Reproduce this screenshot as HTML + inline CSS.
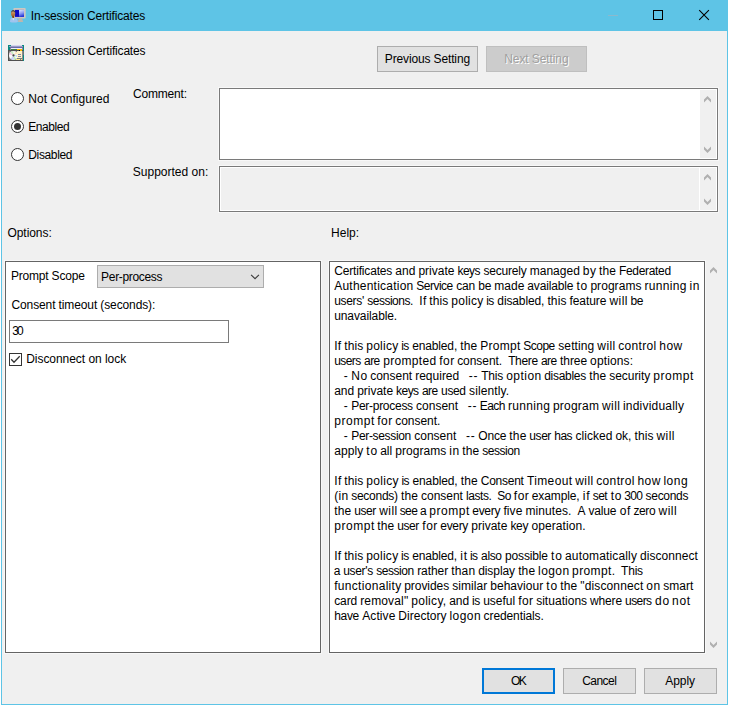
<!DOCTYPE html>
<html lang="en">
<head>
<meta charset="utf-8">
<title>In-session Certificates</title>
<style>
html,body{margin:0;padding:0;background:#fff;}
body{width:730px;height:708px;position:relative;overflow:hidden;font-family:"Liberation Sans",sans-serif;font-size:12px;color:#000;}
.abs,.t,#win div,#win svg{position:absolute;}
#win{position:absolute;left:1px;top:0;width:727px;height:705px;background:#5ec4e6;}
#client{left:1px;top:31px;width:725px;height:673px;background:#f0f0f0;}
.t{white-space:pre;line-height:15px;height:15px;font-size:12px;color:#000;}
.t.w span{position:absolute;top:0;white-space:pre;}
.t.dis{color:#a0a0a0;text-shadow:1px 1px 0 #fff;}
.btn{background:#e1e1e1;border:1px solid #adadad;box-sizing:border-box;}
.btn.def{border:2px solid #0078d7;}
.btn.off{background:#cccccc;border-color:#bfbfbf;}
.box{box-sizing:border-box;border:1px solid #7a7a7a;background:#fff;box-shadow:0 0 0 1px rgba(255,255,255,.5);}
.panel{box-sizing:border-box;border:1px solid #646464;background:#fff;box-shadow:0 0 0 1px rgba(255,255,255,.5);}
.radio{width:13px;height:13px;box-sizing:border-box;border:1px solid #333;border-radius:50%;background:#fff;}
.radio.on::after{content:"";position:absolute;left:2px;top:2px;width:7px;height:7px;border-radius:50%;background:#333;}
</style>
</head>
<body>
<div id="win">
  <div id="client"></div>
</div>
<!-- all coordinates below are page coordinates -->
<div id="ui">
  <!-- caption buttons -->
  <svg class="abs" style="left:600px;top:0" width="128" height="31" viewBox="0 0 128 31">
    <rect x="8" y="15" width="10" height="1" fill="#8cb9cc"/>
    <rect x="53.5" y="10.5" width="9" height="9" fill="none" stroke="#000" stroke-width="1"/>
    <path d="M99.2 10.2 L108.9 19.9 M108.9 10.2 L99.2 19.9" stroke="#000" stroke-width="1.05" fill="none"/>
  </svg>

  <!-- title icon -->
  <svg class="abs" style="left:8px;top:5px" width="20" height="20" viewBox="-2 -2 20 20">
    <defs>
      <filter id="sb" x="-20%" y="-20%" width="140%" height="140%"><feGaussianBlur stdDeviation="0.35"/></filter>
      <linearGradient id="scr2" x1="0" x2="0.25" y1="0" y2="1"><stop offset="0" stop-color="#dfe6ff"/><stop offset=".55" stop-color="#8c9cf2"/><stop offset="1" stop-color="#2a3ad8"/></linearGradient>
      <linearGradient id="skin" x1="0" x2="0" y1="0" y2="1"><stop offset="0" stop-color="#e0a878"/><stop offset="1" stop-color="#9a5a20"/></linearGradient>
    </defs>
    <g filter="url(#sb)">
      <rect x="3.4" y="1.1" width="12.3" height="10.4" rx="1" fill="#cec8c0"/>
      <rect x="5" y="2.9" width="9" height="7" fill="#0a0ac4"/>
      <rect x="9" y="2.9" width="5" height="7" fill="url(#scr2)"/>
      <path d="M8.6 11.3 L12 11.3 L13.2 14.9 L8 14.9 Z" fill="#bdb6ae"/>
      <ellipse cx="3.1" cy="6.6" rx="2.1" ry="3.1" fill="url(#skin)"/>
      <rect x="2.2" y="9" width="2" height="2" fill="#8a4a14"/>
      <path d="M1 6 Q1.2 2.8 3.4 3 Q5.4 3.2 5.3 6.2 Q4.4 4.4 3.2 4.6 Q1.8 4.6 1 6Z" fill="#4a4a4a"/>
      <path d="M0 15 Q0 10.6 2.2 10.4 L3.2 11.8 L4.4 10.4 Q7.9 10.6 7.9 15 Q4 16.2 0 15Z" fill="#a0c4ee"/>
      <path d="M2.4 11.2 L3.2 13.4 L4.2 11.2 Z" fill="#e4eefb"/>
    </g>
  </svg>

  <!-- policy icon -->
  <svg class="abs" style="left:8px;top:45px" width="16" height="16" viewBox="0 0 16 16">
    <g shape-rendering="crispEdges">
      <rect x="0" y="0" width="16" height="16" fill="#7c7c7c"/>
      <rect x="0" y="0" width="3" height="1" fill="#0a8a80"/><rect x="14" y="0" width="2" height="1" fill="#0a8a80"/>
      <rect x="3" y="0" width="11" height="1" fill="#d4d4ee"/>
      <rect x="0" y="1" width="1" height="4" fill="#0a8a80"/><rect x="1" y="2" width="1" height="3" fill="#0a8a80"/>
      <rect x="1" y="1" width="14" height="1" fill="#9a9ac6"/>
      <rect x="2" y="2" width="13" height="1" fill="#6a6aa6"/>
      <rect x="15" y="1" width="1" height="15" fill="#0a8a80"/>
      <rect x="2" y="3" width="13" height="2" fill="#8a8a9a"/>
      <rect x="3" y="3" width="11" height="1" fill="#eeeefa"/>
      <rect x="3" y="4" width="6" height="1" fill="#3f8040"/>
      <rect x="9" y="4" width="5" height="1" fill="#f8b800"/>
      <rect x="0" y="5" width="15" height="1" fill="#505050"/>
      <rect x="11" y="5" width="1" height="1" fill="#000"/><rect x="12" y="5" width="2" height="1" fill="#f8b800"/>
      <rect x="0" y="6" width="1" height="10" fill="#505050"/>
      <rect x="0" y="15" width="15" height="1" fill="#505050"/>
      <rect x="14" y="6" width="1" height="9" fill="#8c8c8c"/>
      <rect x="15" y="6" width="1" height="4" fill="#6a7a7a"/>
    </g>
    <circle cx="5.5" cy="10.4" r="4.5" fill="#fafafa"/>
    <path d="M5.5 10.4 L2.3 7.2 A4.5 4.5 0 0 1 5.2 5.9Z" fill="#c8f0c0"/>
    <path d="M5.5 10.4 L1.1 9.6 A4.5 4.5 0 0 1 2.3 7.2Z" fill="#f4c8e4"/>
    <path d="M5.5 10.4 L2.6 13.8 A4.5 4.5 0 0 0 6 14.9Z" fill="#c8d0fa"/>
    <path d="M5.5 10.4 L6 14.9 A4.5 4.5 0 0 0 8.4 13.8Z" fill="#c0f0b8"/>
    <path d="M5.5 10.4 L9.6 12.2 A4.5 4.5 0 0 0 10 10Z" fill="#b8dcf8"/>
    <path d="M5.5 10.4 L9.6 8.4 A4.5 4.5 0 0 0 7.6 6.4Z" fill="#fce4c0"/>
    <circle cx="5.5" cy="10.4" r="1.1" fill="#454545"/>
    <g shape-rendering="crispEdges">
      <rect x="9" y="6" width="5" height="7" fill="#fff3c8"/>
      <rect x="10" y="9" width="3" height="1" fill="#8484aa"/>
      <rect x="10" y="11" width="3" height="1" fill="#8484aa"/>
      <rect x="8" y="14" width="4" height="1" fill="#ffe88c"/>
      <rect x="13" y="14" width="1" height="1" fill="#ffe88c"/>
    </g>
  </svg>

  <!-- prev / next -->
  <div class="abs btn" style="left:377px;top:46px;width:101px;height:26px"></div>
  <div class="abs btn off" style="left:486px;top:46px;width:101px;height:26px"></div>

  <!-- radios -->
  <div class="abs radio" style="left:11px;top:92px"></div>
  <div class="abs radio on" style="left:11px;top:120px"></div>
  <div class="abs radio" style="left:11px;top:148px"></div>

  <!-- comment box -->
  <div class="abs box" style="left:219px;top:88px;width:499px;height:72px"></div>
  <div class="abs" style="left:700px;top:90px;width:16px;height:68px;background:#f0f0f0"></div>

  <!-- supported box -->
  <div class="abs box" style="left:219px;top:166px;width:499px;height:46px"></div>
  <div class="abs" style="left:221px;top:168px;width:478px;height:42px;background:#f0f0f0"></div>
  <div class="abs" style="left:700px;top:168px;width:16px;height:42px;background:#f0f0f0"></div>

  <!-- panels -->
  <div class="abs panel" style="left:5px;top:261px;width:316px;height:392px"></div>
  <div class="abs panel" style="left:329px;top:261px;width:376px;height:392px"></div>

  <!-- scroll chevrons -->
  <svg class="abs" style="left:0;top:0" width="730" height="708" viewBox="0 0 730 708" fill="#b0b0b0">
    <polygon points="707.5,96 711,99.5 711,102.4 707.5,98.9 704,102.4 704,99.5"/>
    <polygon points="707.5,153 711,149.5 711,146.6 707.5,150.1 704,146.6 704,149.5"/>
    <polygon points="707.5,174 711,177.5 711,180.4 707.5,176.9 704,180.4 704,177.5"/>
    <polygon points="707.5,205 711,201.5 711,198.6 707.5,202.1 704,198.6 704,201.5"/>
    <polygon points="713.5,267 717,270.5 717,273.4 713.5,269.9 710,273.4 710,270.5"/>
    <polygon points="713.5,648 717,644.5 717,641.6 713.5,645.1 710,641.6 710,644.5"/>
  </svg>

  <!-- dropdown -->
  <div class="abs btn" style="left:97px;top:265px;width:167px;height:23px"></div>
  <svg class="abs" style="left:250px;top:273px" width="11" height="8" viewBox="0 0 11 8"><path d="M1.1 1.85 L5.03 5.6 L8.95 1.85" fill="none" stroke="#3c3c3c" stroke-width="1.15"/></svg>

  <!-- input -->
  <div class="abs box" style="left:9px;top:320px;width:220px;height:23px"></div>

  <!-- checkbox -->
  <div class="abs" style="left:9px;top:353px;width:13px;height:13px;box-sizing:border-box;border:1px solid #333;background:#fff"></div>
  <svg class="abs" style="left:9px;top:353px" width="13" height="13" viewBox="0 0 13 13"><path d="M2.2 6.3 L5 9.3 L10.7 3.3" fill="none" stroke="#333" stroke-width="1.25"/></svg>

  <!-- bottom buttons -->
  <div class="abs btn def" style="left:482px;top:668px;width:73px;height:26px"></div>
  <div class="abs btn" style="left:563px;top:668px;width:73px;height:26px"></div>
  <div class="abs btn" style="left:644px;top:668px;width:73px;height:26px"></div>
</div>
<div id="txt">
<div class="t w" style="left:334.20px;top:264px"><span style="left:0.00px;letter-spacing:-0.169px">Certificates </span><span style="left:61.16px;letter-spacing:0.016px">and </span><span style="left:84.22px;letter-spacing:0.013px">private </span><span style="left:123.33px;letter-spacing:-0.537px">keys </span><span style="left:149.40px;letter-spacing:-0.224px">securely </span><span style="left:195.52px;letter-spacing:0.016px">managed </span><span style="left:248.66px;letter-spacing:0.361px">by </span><span style="left:264.71px;letter-spacing:0.182px">the </span><span style="left:284.76px;letter-spacing:-0.320px">Federated</span></div>
<div class="t w" style="left:334.20px;top:279px"><span style="left:0.00px;letter-spacing:0.232px">Authentication </span><span style="left:82.07px;letter-spacing:-0.497px">Service </span><span style="left:122.10px;letter-spacing:-0.166px">can </span><span style="left:144.12px;letter-spacing:-0.337px">be </span><span style="left:160.13px;letter-spacing:0.002px">made </span><span style="left:193.16px;letter-spacing:-0.166px">available </span><span style="left:242.30px;letter-spacing:0.800px">to </span><span style="left:256.21px;letter-spacing:0.051px">programs </span><span style="left:310.25px;letter-spacing:0.334px">running </span><span style="left:355.29px;letter-spacing:0.668px">in</span></div>
<div class="t w" style="left:334.20px;top:294px"><span style="left:0.00px;letter-spacing:-0.321px">users' </span><span style="left:33.03px;letter-spacing:-0.497px">sessions.  </span><span style="left:85.08px;letter-spacing:0.339px">If </span><span style="left:95.09px;letter-spacing:0.115px">this </span><span style="left:117.11px;letter-spacing:0.270px">policy </span><span style="left:152.12px;letter-spacing:-0.600px">is </span><span style="left:163.16px;letter-spacing:-0.124px">disabled, </span><span style="left:213.21px;letter-spacing:0.115px">this </span><span style="left:235.23px;letter-spacing:-0.054px">feature </span><span style="left:275.27px;letter-spacing:0.451px">will </span><span style="left:296.29px;letter-spacing:-0.335px">be</span></div>
<div class="t w" style="left:334.20px;top:309px"><span style="left:0.00px;letter-spacing:-0.095px">unavailable.</span></div>
<div class="t w" style="left:334.20px;top:339px"><span style="left:0.00px;letter-spacing:0.334px">If </span><span style="left:10.00px;letter-spacing:0.111px">this </span><span style="left:32.01px;letter-spacing:0.266px">policy </span><span style="left:66.99px;letter-spacing:-0.600px">is </span><span style="left:78.02px;letter-spacing:-0.147px">enabled, </span><span style="left:126.04px;letter-spacing:0.162px">the </span><span style="left:146.04px;letter-spacing:0.267px">Prompt </span><span style="left:189.05px;letter-spacing:-0.504px">Scope </span><span style="left:224.06px;letter-spacing:0.109px">setting </span><span style="left:263.08px;letter-spacing:0.447px">will </span><span style="left:284.08px;letter-spacing:0.332px">control </span><span style="left:325.09px;letter-spacing:0.496px">how</span></div>
<div class="t w" style="left:334.20px;top:354px"><span style="left:0.00px;letter-spacing:-0.588px">users </span><span style="left:29.92px;letter-spacing:-0.600px">are </span><span style="left:48.98px;letter-spacing:0.327px">prompted </span><span style="left:104.96px;letter-spacing:0.496px">for </span><span style="left:122.96px;letter-spacing:-0.054px">consent.  </span><span style="left:173.94px;letter-spacing:-0.339px">There </span><span style="left:206.86px;letter-spacing:-0.600px">are </span><span style="left:225.92px;letter-spacing:-0.090px">three </span><span style="left:255.91px;letter-spacing:0.137px">options:</span></div>
<div class="t w" style="left:334.20px;top:369px"><span style="left:0.00px;letter-spacing:0.000px">   </span><span style="left:9.51px;letter-spacing:0.000px">- </span><span style="left:17.00px;letter-spacing:0.665px">No </span><span style="left:36.01px;letter-spacing:-0.003px">consent </span><span style="left:81.02px;letter-spacing:-0.002px">required   </span><span style="left:134.64px;letter-spacing:0.800px">-- </span><span style="left:147.04px;letter-spacing:-0.221px">This </span><span style="left:172.05px;letter-spacing:0.463px">option </span><span style="left:210.06px;letter-spacing:-0.288px">disables </span><span style="left:255.07px;letter-spacing:0.162px">the </span><span style="left:275.08px;letter-spacing:-0.047px">security </span><span style="left:319.09px;letter-spacing:0.533px">prompt</span></div>
<div class="t w" style="left:334.20px;top:384px"><span style="left:0.00px;letter-spacing:-0.022px">and </span><span style="left:22.97px;letter-spacing:-0.010px">private </span><span style="left:61.93px;letter-spacing:-0.567px">keys </span><span style="left:87.82px;letter-spacing:-0.600px">are </span><span style="left:106.88px;letter-spacing:-0.350px">used </span><span style="left:134.85px;letter-spacing:0.104px">silently.</span></div>
<div class="t w" style="left:334.20px;top:399px"><span style="left:0.00px;letter-spacing:0.000px">   </span><span style="left:9.49px;letter-spacing:0.000px">- </span><span style="left:16.99px;letter-spacing:-0.274px">Per-process </span><span style="left:81.93px;letter-spacing:-0.011px">consent   </span><span style="left:133.49px;letter-spacing:0.800px">-- </span><span style="left:145.59px;letter-spacing:-0.600px">Each </span><span style="left:173.85px;letter-spacing:0.322px">running </span><span style="left:218.81px;letter-spacing:0.213px">program </span><span style="left:267.77px;letter-spacing:0.440px">will </span><span style="left:288.75px;letter-spacing:0.204px">individually</span></div>
<div class="t w" style="left:334.20px;top:414px"><span style="left:0.00px;letter-spacing:0.538px">prompt </span><span style="left:43.04px;letter-spacing:0.505px">for </span><span style="left:61.06px;letter-spacing:-0.046px">consent.</span></div>
<div class="t w" style="left:334.20px;top:429px"><span style="left:0.00px;letter-spacing:0.000px">   </span><span style="left:9.51px;letter-spacing:0.000px">- </span><span style="left:17.02px;letter-spacing:-0.330px">Per-session </span><span style="left:80.07px;letter-spacing:0.001px">consent   </span><span style="left:131.72px;letter-spacing:0.800px">-- </span><span style="left:144.13px;letter-spacing:-0.219px">Once </span><span style="left:175.15px;letter-spacing:0.167px">the </span><span style="left:195.17px;letter-spacing:-0.441px">user </span><span style="left:220.13px;letter-spacing:-0.600px">has </span><span style="left:241.21px;letter-spacing:0.059px">clicked </span><span style="left:281.25px;letter-spacing:0.003px">ok, </span><span style="left:300.26px;letter-spacing:0.114px">this </span><span style="left:322.28px;letter-spacing:0.451px">will</span></div>
<div class="t w" style="left:334.20px;top:444px"><span style="left:0.00px;letter-spacing:0.078px">apply </span><span style="left:32.10px;letter-spacing:0.800px">to </span><span style="left:46.00px;letter-spacing:-0.003px">all </span><span style="left:61.00px;letter-spacing:0.045px">programs </span><span style="left:115.00px;letter-spacing:0.660px">in </span><span style="left:128.00px;letter-spacing:0.159px">the </span><span style="left:148.00px;letter-spacing:-0.448px">session</span></div>
<div class="t w" style="left:334.20px;top:474px"><span style="left:0.00px;letter-spacing:0.360px">If </span><span style="left:10.04px;letter-spacing:0.134px">this </span><span style="left:32.13px;letter-spacing:0.290px">policy </span><span style="left:67.25px;letter-spacing:-0.600px">is </span><span style="left:78.31px;letter-spacing:-0.123px">enabled, </span><span style="left:126.50px;letter-spacing:0.193px">the </span><span style="left:146.58px;letter-spacing:-0.254px">Consent </span><span style="left:192.76px;letter-spacing:0.379px">Timeout </span><span style="left:240.95px;letter-spacing:0.469px">will </span><span style="left:262.04px;letter-spacing:0.356px">control </span><span style="left:303.20px;letter-spacing:0.539px">how </span><span style="left:329.30px;letter-spacing:0.469px">long</span></div>
<div class="t w" style="left:334.20px;top:489px"><span style="left:0.00px;letter-spacing:0.318px">(in </span><span style="left:16.97px;letter-spacing:-0.255px">seconds) </span><span style="left:66.87px;letter-spacing:0.142px">the </span><span style="left:86.83px;letter-spacing:-0.019px">consent </span><span style="left:131.74px;letter-spacing:-0.412px">lasts.  </span><span style="left:163.12px;letter-spacing:-0.600px">So </span><span style="left:179.65px;letter-spacing:0.483px">for </span><span style="left:197.61px;letter-spacing:-0.112px">example, </span><span style="left:248.60px;letter-spacing:0.800px">if </span><span style="left:258.49px;letter-spacing:-0.519px">set </span><span style="left:276.54px;letter-spacing:0.800px">to </span><span style="left:290.00px;letter-spacing:-0.600px">300 </span><span style="left:311.38px;letter-spacing:-0.297px">seconds</span></div>
<div class="t w" style="left:334.20px;top:504px"><span style="left:0.00px;letter-spacing:0.169px">the </span><span style="left:20.02px;letter-spacing:-0.439px">user </span><span style="left:45.05px;letter-spacing:0.452px">will </span><span style="left:65.51px;letter-spacing:-0.600px">see </span><span style="left:85.77px;letter-spacing:0.000px">a </span><span style="left:95.11px;letter-spacing:0.540px">prompt </span><span style="left:138.16px;letter-spacing:-0.328px">every </span><span style="left:169.20px;letter-spacing:0.116px">five </span><span style="left:191.22px;letter-spacing:0.100px">minutes.  </span><span style="left:243.29px;letter-spacing:0.000px">A </span><span style="left:254.30px;letter-spacing:-0.164px">value </span><span style="left:285.44px;letter-spacing:0.800px">of </span><span style="left:299.35px;letter-spacing:-0.439px">zero </span><span style="left:324.38px;letter-spacing:0.452px">will</span></div>
<div class="t w" style="left:334.20px;top:519px"><span style="left:0.00px;letter-spacing:0.540px">prompt </span><span style="left:43.05px;letter-spacing:0.169px">the </span><span style="left:63.08px;letter-spacing:-0.439px">user </span><span style="left:88.11px;letter-spacing:0.507px">for </span><span style="left:106.13px;letter-spacing:-0.328px">every </span><span style="left:137.16px;letter-spacing:0.004px">private </span><span style="left:176.21px;letter-spacing:-0.326px">key </span><span style="left:197.24px;letter-spacing:0.077px">operation.</span></div>
<div class="t w" style="left:334.20px;top:549px"><span style="left:0.00px;letter-spacing:0.326px">If </span><span style="left:9.99px;letter-spacing:0.104px">this </span><span style="left:31.97px;letter-spacing:0.259px">policy </span><span style="left:66.91px;letter-spacing:-0.600px">is </span><span style="left:77.94px;letter-spacing:-0.154px">enabled, </span><span style="left:125.99px;letter-spacing:0.800px">it </span><span style="left:135.85px;letter-spacing:-0.600px">is </span><span style="left:146.88px;letter-spacing:-0.344px">also </span><span style="left:170.86px;letter-spacing:-0.152px">possible </span><span style="left:216.91px;letter-spacing:0.800px">to </span><span style="left:230.81px;letter-spacing:0.159px">automatically </span><span style="left:305.75px;letter-spacing:0.065px">disconnect</span></div>
<div class="t w" style="left:334.20px;top:564px"><span style="left:-0.34px;letter-spacing:0.000px">a </span><span style="left:9.00px;letter-spacing:-0.329px">user's </span><span style="left:41.99px;letter-spacing:-0.450px">session </span><span style="left:82.97px;letter-spacing:-0.072px">rather </span><span style="left:116.96px;letter-spacing:0.212px">than </span><span style="left:143.95px;letter-spacing:-0.061px">display </span><span style="left:183.94px;letter-spacing:0.156px">the </span><span style="left:203.93px;letter-spacing:0.407px">logon </span><span style="left:237.92px;letter-spacing:0.384px">prompt.  </span><span style="left:286.91px;letter-spacing:-0.226px">This</span></div>
<div class="t w" style="left:334.20px;top:579px"><span style="left:0.00px;letter-spacing:0.304px">functionality </span><span style="left:70.02px;letter-spacing:-0.049px">provides </span><span style="left:118.03px;letter-spacing:0.058px">similar </span><span style="left:156.04px;letter-spacing:0.039px">behaviour </span><span style="left:212.16px;letter-spacing:0.800px">to </span><span style="left:226.06px;letter-spacing:0.162px">the </span><span style="left:246.07px;letter-spacing:0.139px">&quot;disconnect </span><span style="left:312.09px;letter-spacing:0.656px">on </span><span style="left:329.09px;letter-spacing:0.002px">smart</span></div>
<div class="t w" style="left:334.20px;top:594px"><span style="left:0.00px;letter-spacing:-0.117px">card </span><span style="left:25.99px;letter-spacing:0.150px">removal&quot; </span><span style="left:76.98px;letter-spacing:0.311px">policy, </span><span style="left:114.97px;letter-spacing:-0.014px">and </span><span style="left:137.93px;letter-spacing:-0.600px">is </span><span style="left:148.96px;letter-spacing:-0.006px">useful </span><span style="left:183.95px;letter-spacing:0.496px">for </span><span style="left:201.94px;letter-spacing:0.032px">situations </span><span style="left:255.93px;letter-spacing:-0.173px">where </span><span style="left:290.92px;letter-spacing:-0.588px">users </span><span style="left:320.91px;letter-spacing:0.648px">do </span><span style="left:337.91px;letter-spacing:0.657px">not</span></div>
<div class="t w" style="left:334.20px;top:609px"><span style="left:0.00px;letter-spacing:-0.317px">have </span><span style="left:28.08px;letter-spacing:0.083px">Active </span><span style="left:64.18px;letter-spacing:0.016px">Directory </span><span style="left:115.33px;letter-spacing:0.432px">logon </span><span style="left:149.43px;letter-spacing:-0.108px">credentials.</span></div>
<div class="t title" style="left:30.73px;top:9px;letter-spacing:-0.161px">In-session Certificates</div>
<div class="t" style="left:31.73px;top:44px;letter-spacing:-0.195px">In-session Certificates</div>
<div class="t" style="left:384.80px;top:52px;letter-spacing:-0.138px">Previous Setting</div>
<div class="t dis" style="left:504.30px;top:52px;letter-spacing:-0.101px">Next Setting</div>
<div class="t" style="left:28.30px;top:92px;letter-spacing:0.025px">Not Configured</div>
<div class="t" style="left:28.30px;top:120px;letter-spacing:-0.461px">Enabled</div>
<div class="t" style="left:28.30px;top:148px;letter-spacing:-0.361px">Disabled</div>
<div class="t" style="left:133.01px;top:87px;letter-spacing:-0.193px">Comment:</div>
<div class="t" style="left:132.81px;top:165px;letter-spacing:0.003px">Supported on:</div>
<div class="t" style="left:7.46px;top:226px;letter-spacing:-0.054px">Options:</div>
<div class="t" style="left:331.00px;top:226px;letter-spacing:0.023px">Help:</div>
<div class="t" style="left:11.00px;top:269px;letter-spacing:-0.199px">Prompt Scope</div>
<div class="t" style="left:101.10px;top:270px;letter-spacing:-0.323px">Per-process</div>
<div class="t" style="left:11.51px;top:298px;letter-spacing:-0.116px">Consent timeout (seconds):</div>
<div class="t" style="left:12.27px;top:324px;letter-spacing:-1.996px">30</div>
<div class="t" style="left:26.20px;top:352px;letter-spacing:-0.044px">Disconnect on lock</div>
<div class="t" style="left:511.06px;top:674px;letter-spacing:-1.553px">OK</div>
<div class="t" style="left:582.21px;top:674px;letter-spacing:-0.537px">Cancel</div>
<div class="t" style="left:665.36px;top:674px;letter-spacing:-0.111px">Apply</div>
</div>
</body>
</html>
